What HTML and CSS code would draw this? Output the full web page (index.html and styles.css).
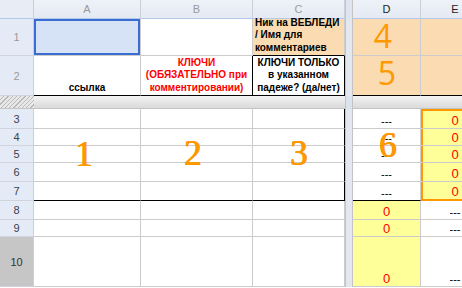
FILE: index.html
```html
<!DOCTYPE html>
<html>
<head>
    <meta charset="UTF-8">
    <title>Таблица ключей</title>
    <link rel="stylesheet" href="styles.css">
</head>
<body>
    <div class="sheet">
        <!-- column headers -->
        <div class="ch corner"></div>
        <div class="ch dim">A</div>
        <div class="ch dim">B</div>
        <div class="ch dim">C</div>
        <div class="fz fz-head"></div>
        <div class="ch">D</div>
        <div class="ch">E</div>

        <!-- row 1 -->
        <div class="rh dim">1</div>
        <div class="cell sel"></div>
        <div class="cell"></div>
        <div class="cell peach bold left top-of-box">Ник на ВЕБЛЕДИ / Имя для комментариев</div>
        <div class="fz"></div>
        <div class="cell peach"></div>
        <div class="cell peach"></div>

        <!-- row 2 -->
        <div class="rh dim">2</div>
        <div class="cell bold line">ссылка</div>
        <div class="cell bold red line box-left">КЛЮЧИ (ОБЯЗАТЕЛЬНО при комментировании)</div>
        <div class="cell bold line edge">КЛЮЧИ ТОЛЬКО в указанном падеже? (да/нет)</div>
        <div class="fz"></div>
        <div class="cell peach line"></div>
        <div class="cell peach line"></div>

        <!-- frozen split -->
        <div class="hatch"></div>
        <div class="split wide"></div>
        <div class="fz fz-cross"></div>
        <div class="split narrow"></div>

        <!-- rows 3-7 -->
        <div class="rh">3</div>
        <div class="cell"></div>
        <div class="cell"></div>
        <div class="cell edge"></div>
        <div class="fz"></div>
        <div class="cell mid">---</div>
        <div class="cell mid yellow num hl hl-top">0</div>

        <div class="rh">4</div>
        <div class="cell"></div>
        <div class="cell"></div>
        <div class="cell edge"></div>
        <div class="fz"></div>
        <div class="cell mid">---</div>
        <div class="cell mid yellow num hl">0</div>

        <div class="rh">5</div>
        <div class="cell"></div>
        <div class="cell"></div>
        <div class="cell edge"></div>
        <div class="fz"></div>
        <div class="cell mid">---</div>
        <div class="cell mid yellow num hl">0</div>

        <div class="rh">6</div>
        <div class="cell"></div>
        <div class="cell"></div>
        <div class="cell edge"></div>
        <div class="fz"></div>
        <div class="cell mid">---</div>
        <div class="cell mid yellow num hl">0</div>

        <div class="rh">7</div>
        <div class="cell line"></div>
        <div class="cell line"></div>
        <div class="cell line edge"></div>
        <div class="fz"></div>
        <div class="cell mid line">---</div>
        <div class="cell mid yellow num hl hl-bottom">0</div>

        <!-- rows 8-10 -->
        <div class="rh">8</div>
        <div class="cell"></div>
        <div class="cell"></div>
        <div class="cell"></div>
        <div class="fz"></div>
        <div class="cell mid yellow num">0</div>
        <div class="cell mid">---</div>

        <div class="rh">9</div>
        <div class="cell"></div>
        <div class="cell"></div>
        <div class="cell"></div>
        <div class="fz"></div>
        <div class="cell mid yellow num">0</div>
        <div class="cell mid">---</div>

        <div class="rh picked">10</div>
        <div class="cell"></div>
        <div class="cell"></div>
        <div class="cell"></div>
        <div class="fz"></div>
        <div class="cell mid yellow num">0</div>
        <div class="cell mid">---</div>

        <!-- orange notes on top of the sheet -->
        <span class="mark m1">1</span>
        <span class="mark m2">2</span>
        <span class="mark m3">3</span>
        <span class="mark sans m4">4</span>
        <span class="mark sans m5">5</span>
        <span class="mark m6">6</span>
    </div>
</body>
</html>
```

FILE: styles.css
```css
body {
    margin: 0;
    width: 462px;
    height: 288px;
    overflow: hidden;
    background: #fff;
    font-family: "Liberation Sans", Arial, sans-serif;
}
.sheet {
    position: relative;
    display: grid;
    grid-template-columns: 34px 107px 112px 92px 8px 68px 69px;
    grid-template-rows: 19px 37px 40px 13px 20px 17px 17px 19px 19px 19px 17px 50px;
    width: 490px;
}
.sheet > div {
    box-sizing: border-box;
}

/* headers */
.ch {
    display: flex;
    align-items: center;
    justify-content: center;
    font-size: 11px;
    color: #222;
    background: linear-gradient(#eef2f8, #e4eaf3);
    border-right: 1px solid #c9d0da;
    border-bottom: 1px solid #b4c8ea;
}
.ch.corner {
    background: #e8edf5;
}
.rh {
    display: flex;
    align-items: center;
    justify-content: center;
    font-size: 11px;
    color: #3a4250;
    background: #e4ebf6;
    border-right: 1px solid #c9d0da;
    border-bottom: 1px solid #d0d5dd;
}
.ch.dim,
.rh.dim {
    color: #9a9a9a;
}
.rh.picked {
    background: #c6c6c6;
    color: #333;
}

/* cells */
.cell {
    display: flex;
    align-items: flex-end;
    justify-content: center;
    text-align: center;
    padding: 0 2px 1px;
    font-size: 10px;
    line-height: 12.5px;
    color: #000;
    border-right: 1px solid #cccccc;
    border-bottom: 1px solid #cccccc;
}
.cell.left {
    justify-content: flex-start;
    text-align: left;
}
.bold {
    font-weight: bold;
}
.red {
    color: #ff0000;
}
.peach {
    background: #fadbb2;
}
.yellow {
    background: #ffff99;
}
.num {
    font-size: 13px;
    color: #ff0000;
}
.mid {
    font-size: 11px;
}
.num.mid {
    font-size: 13px;
}
.sel {
    background: #d6e2f5;
    box-shadow: inset 0 0 0 2px #3a6cd2;
}

/* black rules */
.line {
    border-bottom-color: #000;
}
.edge {
    border-right-color: #000;
}
.box-left {
    border-right-color: #000;
}
.top-of-box {
    border-bottom-color: #000;
}

/* orange outline round E3:E7 */
.hl {
    box-shadow: inset 2px 0 #ff9900;
}
.hl.hl-top {
    box-shadow: inset 2px 0 #ff9900, inset 0 2px #ff9900;
}
.hl.hl-bottom {
    border-bottom: 2px solid #ff9900;
}

/* frozen panes */
.fz {
    background: #e3e8ef;
    border-left: 1px solid #c4c4c4;
    border-right: 1px solid #c4c4c4;
}
.fz-head {
    background: #dfe5ee;
}
.fz-cross {
    background: #dde3ec;
}
.hatch {
    background: repeating-linear-gradient(-45deg, #e8e8e8 0 2px, #b9b9b9 2px 3px);
    border-bottom: 1px solid #c4c4c4;
}
.split {
    background: linear-gradient(#f3f3f3, #dadada);
    border-bottom: 1px solid #c4c4c4;
}
.split.wide {
    grid-column: span 3;
}
.split.narrow {
    grid-column: span 2;
}

/* orange notes */
.mark {
    position: absolute;
    width: 40px;
    text-align: center;
    font-family: "Liberation Serif", "Times New Roman", serif;
    font-size: 35px;
    line-height: 1;
    color: #ff9900;
    text-shadow: 0.6px 0 #f39200, -0.4px 0 #f39200;
}
.mark.sans {
    font-family: "Open Sans", sans-serif;
    font-size: 32px;
    text-shadow: none;
}
.m1 { left: 64px; top: 137px; }
.m2 { left: 173px; top: 136px; }
.m3 { left: 279px; top: 136px; }
.m4 { left: 363px; top: 20px; }
.m5 { left: 367px; top: 57px; }
.m6 { left: 368px; top: 128px; }
```
